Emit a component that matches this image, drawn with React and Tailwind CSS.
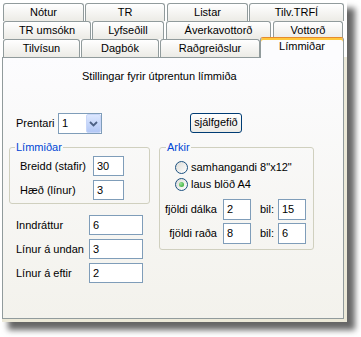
const tabBase =
  "h-[18px] flex items-center justify-center border border-b-0 border-[#919b9c] rounded-t-[3px] bg-linear-to-b from-[#ffffff] to-[#ecebe6] text-[11px] leading-[13px] text-black whitespace-nowrap";

function Input({ value, className }) {
  return (
    <div className={"border border-[#7f9db9] bg-white pl-[3px] flex items-center " + className}>
      {value}
    </div>
  );
}

function Radio({ checked }) {
  return (
    <div className="w-[13px] h-[13px] rounded-full border border-[#1c5180] bg-[linear-gradient(135deg,#dcdcd7,#ffffff)] flex items-center justify-center shrink-0">
      {checked && (
        <div className="w-[5px] h-[5px] rounded-full bg-[radial-gradient(circle_at_35%_35%,#9be39b,#21a121)]" />
      )}
    </div>
  );
}

export default function App() {
  return (
    <div className="w-[361px] h-[337px] bg-white font-['Liberation_Sans',Arial,sans-serif] text-[11px] leading-[13px] text-black">
      <div className="w-[347px] h-[322px] bg-white flex flex-col shadow-[8px_8px_6px_rgba(0,0,0,0.6)]">
        {/* Tab strip */}
        <div className="h-[57px] pt-[3px] pl-[3px] flex flex-col">
          <div className="h-[18px] flex items-start">
            <div className={tabBase + " w-[81px]"}>Nótur</div>
            <div className={tabBase + " ml-[1px] w-[80px]"}>TR</div>
            <div className={tabBase + " ml-[2px] w-[81px]"}>Listar</div>
            <div className={tabBase + " ml-[1px] w-[95px]"}>Tilv.TRFÍ</div>
          </div>
          <div className="h-[18px] flex items-start">
            <div className={tabBase + " w-[88px]"}>TR umsókn</div>
            <div className={tabBase + " ml-[1px] w-[72px]"}>Lyfseðill</div>
            <div className={tabBase + " ml-[2px] w-[105px]"}>Áverkavottorð</div>
            <div className={tabBase + " ml-[2px] w-[70px]"}>Vottorð</div>
          </div>
          <div className="h-[18px] flex items-start">
            <div className={tabBase + " w-[77px]"}>Tilvísun</div>
            <div className={tabBase + " ml-[1px] w-[78px]"}>Dagbók</div>
            <div className={tabBase + " ml-[1px] w-[100px]"}>Raðgreiðslur</div>
            <div className="relative z-10 -mt-[2px] h-[21px] w-[84px] pb-[3px] flex items-center justify-center border border-b-0 border-[#919b9c] border-t-[#e68b2c] rounded-t-[3px] bg-[#fcfcfe] shadow-[inset_0_2px_0_#ffc83c] whitespace-nowrap">
              Límmiðar
            </div>
          </div>
        </div>

        {/* Panel */}
        <div className="flex pl-[2px]">
          <div className="bg-[#ece9d8] pr-[3px] pb-[3px]">
            <div className="w-[342px] h-[262px] border border-[#919b9c] bg-linear-to-b from-[#fcfcfe] to-[#f3f2ec] flex flex-col">
              <div className="mt-[12px] ml-[79px] whitespace-nowrap">
                Stillingar fyrir útprentun límmiða
              </div>

              <div className="mt-[30px] h-[21px] flex items-center">
                <div className="ml-[13px] w-[42px]">Prentari</div>
                <div className="w-[44px] h-[21px] border border-[#7f9db9] bg-white flex items-center">
                  <span className="ml-[3px] flex-1">1</span>
                  <div className="w-[15px] h-[19px] rounded-[2px] border border-[#c8d6f8] bg-linear-to-b from-[#dce7fe] to-[#b3c8f6] flex items-center justify-center">
                    <svg width="9" height="6" viewBox="0 0 9 6">
                      <path d="M1 1 L4.5 4.5 L8 1" stroke="#4d6185" strokeWidth="1.8" fill="none" />
                    </svg>
                  </div>
                </div>
                <div className="ml-[88px] -mt-[2px] w-[52px] h-[20px] rounded-[3px] border border-[#003c74] bg-linear-to-b from-[#ffffff] to-[#ecebe6] flex items-center justify-center whitespace-nowrap">
                  sjálfgefið
                </div>
              </div>

              <div className="mt-[7px] pl-[6px] flex items-start">
                {/* Left column */}
                <div className="w-[141px] flex flex-col">
                  <fieldset className="border border-[#d0d0bf] rounded-[3px] pb-[3px]">
                    <legend className="ml-[5px] px-[1px] text-[#0046d5] leading-[13px]">Límmiðar</legend>
                    <div className="mt-[2px] flex flex-col gap-[4px]">
                      <div className="h-[20px] flex items-center">
                        <div className="ml-[10px] w-[73px] whitespace-nowrap">Breidd (stafir)</div>
                        <Input value="30" className="w-[31px] h-[20px]" />
                      </div>
                      <div className="h-[20px] flex items-center">
                        <div className="ml-[10px] w-[73px] whitespace-nowrap">Hæð (línur)</div>
                        <Input value="3" className="w-[31px] h-[20px]" />
                      </div>
                    </div>
                  </fieldset>
                  <div className="mt-[11px] flex flex-col gap-[4px]">
                    <div className="h-[20px] flex items-center">
                      <div className="ml-[7px] w-[73px] whitespace-nowrap">Inndráttur</div>
                      <Input value="6" className="w-[54px] h-[20px]" />
                    </div>
                    <div className="h-[20px] flex items-center">
                      <div className="ml-[7px] w-[73px] whitespace-nowrap">Línur á undan</div>
                      <Input value="3" className="w-[54px] h-[20px]" />
                    </div>
                    <div className="h-[20px] flex items-center">
                      <div className="ml-[7px] w-[73px] whitespace-nowrap">Línur á eftir</div>
                      <Input value="2" className="w-[54px] h-[20px]" />
                    </div>
                  </div>
                </div>

                {/* Right column */}
                <fieldset className="ml-[9px] w-[155px] border border-[#d0d0bf] rounded-[3px] pb-[5px]">
                  <legend className="ml-[6px] px-[1px] text-[#0046d5] leading-[13px]">Arkir</legend>
                  <div className="mt-[6px] h-[15px] flex items-center">
                    <div className="ml-[15px]"><Radio /></div>
                    <span className="ml-[3px] whitespace-nowrap">samhangandi 8"x12"</span>
                  </div>
                  <div className="mt-[2px] h-[15px] flex items-center">
                    <div className="ml-[15px]"><Radio checked /></div>
                    <span className="ml-[3px] whitespace-nowrap">laus blöð A4</span>
                  </div>
                  <div className="mt-[7px] flex flex-col gap-[3px]">
                    <div className="h-[21px] flex items-center">
                      <div className="w-[63px] pr-[6px] text-right whitespace-nowrap">fjöldi dálka</div>
                      <Input value="2" className="w-[28px] h-[21px]" />
                      <div className="ml-[9px] w-[18px]">bil:</div>
                      <Input value="15" className="w-[28px] h-[21px]" />
                    </div>
                    <div className="h-[21px] flex items-center">
                      <div className="w-[63px] pr-[6px] text-right whitespace-nowrap">fjöldi raða</div>
                      <Input value="8" className="w-[28px] h-[21px]" />
                      <div className="ml-[9px] w-[18px]">bil:</div>
                      <Input value="6" className="w-[28px] h-[21px]" />
                    </div>
                  </div>
                </fieldset>
              </div>
            </div>
          </div>
        </div>
      </div>
    </div>
  );
}
